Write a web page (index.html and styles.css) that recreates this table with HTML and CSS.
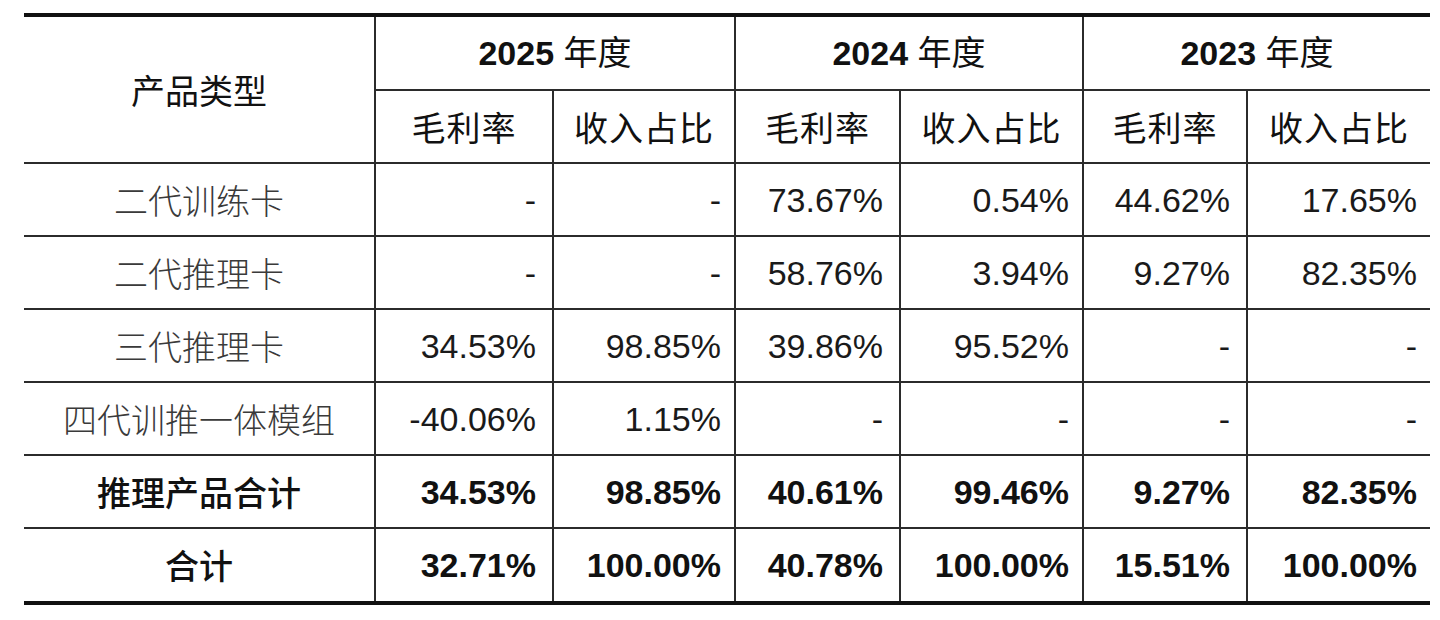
FILE: index.html
```html
<!DOCTYPE html>
<html lang="zh-CN">
<head>
<meta charset="utf-8">
<title>产品毛利率</title>
<link rel="stylesheet" href="styles.css">
</head>
<body>
<div class="wrap">
<table class="tbl">
  <colgroup>
    <col class="c-label">
    <col class="c-178">
    <col class="c-182">
    <col class="c-165">
    <col class="c-183">
    <col class="c-164">
    <col class="c-183">
  </colgroup>
  <thead>
    <tr class="h1">
      <th rowspan="2" class="lab-head">产品类型</th>
      <th colspan="2" class="year"><b>2025</b> 年度</th>
      <th colspan="2" class="year"><b>2024</b> 年度</th>
      <th colspan="2" class="year"><b>2023</b> 年度</th>
    </tr>
    <tr class="h2">
      <th class="sub">毛利率</th>
      <th class="sub">收入占比</th>
      <th class="sub">毛利率</th>
      <th class="sub">收入占比</th>
      <th class="sub">毛利率</th>
      <th class="sub">收入占比</th>
    </tr>
  </thead>
  <tbody>
    <tr class="r">
      <td class="lab">二代训练卡</td>
      <td class="gm">-</td><td class="rv">-</td>
      <td class="gm">73.67%</td><td class="rv">0.54%</td>
      <td class="gm">44.62%</td><td class="rv">17.65%</td>
    </tr>
    <tr class="r">
      <td class="lab">二代推理卡</td>
      <td class="gm">-</td><td class="rv">-</td>
      <td class="gm">58.76%</td><td class="rv">3.94%</td>
      <td class="gm">9.27%</td><td class="rv">82.35%</td>
    </tr>
    <tr class="r">
      <td class="lab">三代推理卡</td>
      <td class="gm">34.53%</td><td class="rv">98.85%</td>
      <td class="gm">39.86%</td><td class="rv">95.52%</td>
      <td class="gm">-</td><td class="rv">-</td>
    </tr>
    <tr class="r">
      <td class="lab">四代训推一体模组</td>
      <td class="gm">-40.06%</td><td class="rv">1.15%</td>
      <td class="gm">-</td><td class="rv">-</td>
      <td class="gm">-</td><td class="rv">-</td>
    </tr>
    <tr class="r strong">
      <td class="lab">推理产品合计</td>
      <td class="gm">34.53%</td><td class="rv">98.85%</td>
      <td class="gm">40.61%</td><td class="rv">99.46%</td>
      <td class="gm">9.27%</td><td class="rv">82.35%</td>
    </tr>
    <tr class="r strong last">
      <td class="lab">合计</td>
      <td class="gm">32.71%</td><td class="rv">100.00%</td>
      <td class="gm">40.78%</td><td class="rv">100.00%</td>
      <td class="gm">15.51%</td><td class="rv">100.00%</td>
    </tr>
  </tbody>
</table>
</div>
</body>
</html>
```

FILE: styles.css
```css
html, body {
  margin: 0;
  padding: 0;
  background: #ffffff;
}

.wrap {
  padding: 13px 0 0 24px;
}

.tbl {
  width: 1406px;
  border-collapse: collapse;
  table-layout: fixed;
  font-family: "Liberation Sans", "Noto Sans CJK SC", sans-serif;
  font-size: 34px;
  color: #1a1a1a;
  border-top: 4px solid #111;
  border-bottom: 4px solid #111;
}

.c-label { width: 351px; }
.c-178 { width: 178px; }
.c-182 { width: 182px; }
.c-165 { width: 165px; }
.c-183 { width: 183px; }
.c-164 { width: 164px; }

.tbl th,
.tbl td {
  border: 2px solid #2b2b2b;
  padding: 0;
  line-height: 1;
  vertical-align: middle;
  white-space: nowrap;
}

.tbl tr > :first-child { border-left: none; }
.tbl tr > :last-child { border-right: none; }
.tbl .lab-head { border-left: none; }

.h1 { height: 75px; }
.h2 { height: 73px; }
.r { height: 73px; }
.r.last { height: 75px; }

.tbl th {
  font-weight: normal;
  text-align: center;
  color: #111;
}

.lab-head {
  font-family: "Noto Sans CJK SC", sans-serif;
  font-weight: 500;
  color: #111;
}

.year {
  font-family: "Liberation Sans", "Noto Sans CJK SC", sans-serif;
}

.year b {
  font-weight: bold;
}

.sub {
  font-family: "Noto Sans CJK SC", sans-serif;
  letter-spacing: 1px;
}

.lab {
  text-align: center;
  font-family: "Noto Sans CJK SC", sans-serif;
  font-weight: 300;
  color: #3a3a3a;
}

.gm {
  text-align: right;
  padding-right: 16px !important;
}

.rv {
  text-align: right;
  padding-right: 13px !important;
}

.strong td {
  font-weight: bold;
  color: #111;
}

.strong .lab {
  font-weight: 500;
  color: #111;
}
```
